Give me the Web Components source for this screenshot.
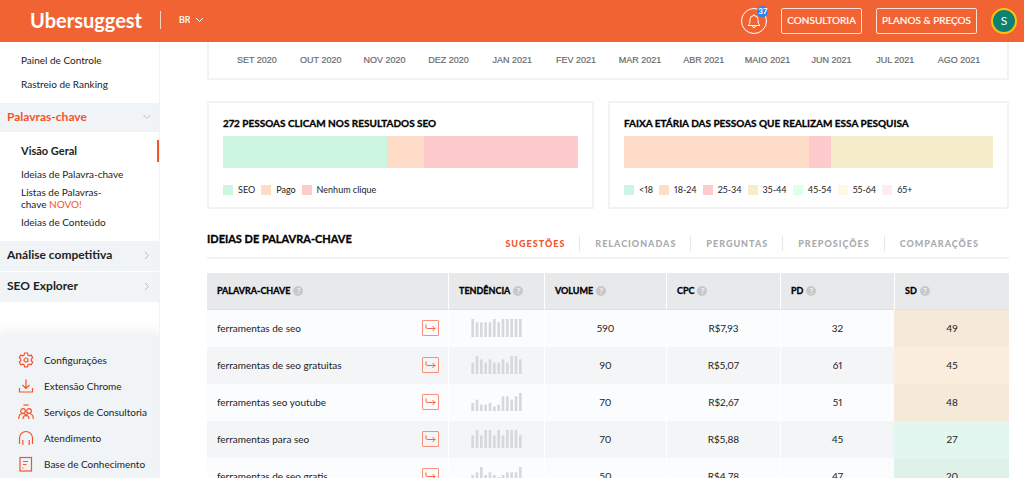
<!DOCTYPE html>
<html lang="pt-BR">
<head>
<meta charset="utf-8">
<title>Ubersuggest</title>
<style>
  body { margin: 0; font-family: Lato, "Open Sans", sans-serif; font-variant-numeric: proportional-nums; color: #222; background: #fff; }
</style>
</head>
<body>
<ub-app>
  <ub-header slot="header"></ub-header>
  <ub-sidebar slot="sidebar"></ub-sidebar>
  <ub-months></ub-months>
  <ub-cards>
    <ub-share-card heading="272 PESSOAS CLICAM NOS RESULTADOS SEO" data-set="clicks"></ub-share-card>
    <ub-share-card heading="FAIXA ETÁRIA DAS PESSOAS QUE REALIZAM ESSA PESQUISA" data-set="ages"></ub-share-card>
  </ub-cards>
  <ub-tabs></ub-tabs>
  <ub-keywords></ub-keywords>
</ub-app>

<script>
class UbElement extends HTMLElement {
  connectedCallback() {
    if (!this.shadowRoot) this.attachShadow({ mode: 'open' }).innerHTML =
      `<style>:host,*{box-sizing:border-box}button,select{font:inherit;color:inherit;margin:0;cursor:pointer}a{color:inherit;text-decoration:none}${this.css()}</style>${this.html()}`;
  }
  css() { return ''; }
  html() { return '<slot></slot>'; }
}

customElements.define('ub-app', class extends UbElement {
  css() { return `
    :host { display: flex; flex-direction: column; height: 100vh; overflow: hidden; }
    .body { display: flex; flex: 1; min-height: 0; }
    main { flex: 1; min-width: 0; padding: 0 15px 0 47px; overflow: hidden; }`; }
  html() { return `<slot name="header"></slot>
    <div class="body"><slot name="sidebar"></slot><main><slot></slot></main></div>`; }
});

customElements.define('ub-header', class extends UbElement {
  css() { return `
    :host { display: block; flex: none; background: #f26334; color: #fff; }
    header { display: flex; align-items: center; height: 42px; padding: 0 7px 0 30px; }
    .logo { font-size: 20px; line-height: 24px; font-weight: 700; padding-bottom: 3px; }
    .rule { width: 1px; height: 18px; background: #fbd0c1; margin: 0 18px 2px 18px; }
    .lang { display: flex; align-items: center; gap: 5px; padding-bottom: 3px; font-size: 9px; }
    select { appearance: none; border: 0; background: none; padding: 0; line-height: 14px; width: 11px; -webkit-text-stroke: .2px #fff; }
    option { color: #222; }
    .actions { display: flex; align-items: center; margin-left: auto; gap: 14px; }
    .bell { position: relative; width: 26px; height: 26px; border: 1px solid #fff; border-radius: 50%; background: none; padding: 0; display: grid; place-items: center; }
    .badge { position: absolute; top: -3px; right: -2px; min-width: 11px; height: 11px; border-radius: 6px; background: #2b83f6; font-size: 8px; line-height: 11px; font-weight: 700; }
    .cta { height: 26px; border: 1px solid #fde0d6; border-radius: 2px; background: none; padding: 0 5px 2px; font-size: 10px; line-height: 14px; white-space: nowrap; -webkit-text-stroke: .2px #fff; }
    .avatar { width: 26px; height: 26px; border-radius: 50%; border: 2px solid #fdc30a; background: #0b8272; padding: 0; font-size: 12px; line-height: 14px; }`; }
  html() { return `<header>
    <a class="logo" href="#">Ubersuggest</a><span class="rule"></span>
    <span class="lang"><select aria-label="Idioma"><option>BR</option></select>
      <svg width="9" height="6" viewBox="0 0 9 6" fill="none" stroke="#fff"><path d="M1 1l3.500 3.500L8 1"/></svg></span>
    <div class="actions">
      <button class="bell" aria-label="Notificações"><svg width="14" height="16" viewBox="0 0 14 16" fill="none" stroke="#fff"><path d="M1 12.500c1.500-1 2-2.500 2-6a4 4 0 0 1 8 0c0 3.500.5 5 2 6zM5.500 13a1.500 1.500 0 0 0 3 0M7 1.200V2.500"/></svg><span class="badge">37</span></button>
      <button class="cta">CONSULTORIA</button>
      <button class="cta">PLANOS &amp; PREÇOS</button>
      <button class="avatar">S</button>
    </div></header>`; }
});

const ICONS = {
  gear: '<circle cx="8" cy="8" r="2"/><path d="M6.500 1h3l.4 2 1.300.8 2-.7 1.500 2.600-1.500 1.400v1.700l1.500 1.400-1.500 2.600-2-.7-1.300.8-.4 2h-3l-.4-2-1.300-.8-2 .7-1.500-2.600 1.500-1.400V7.100L1.300 5.700l1.500-2.600 2 .7 1.300-.8z"/>',
  download: '<path d="M1.500 10v4h13v-4M8 1.500V10M4.500 7L8 10.500 11.500 7"/>',
  people: '<path d="M5.500 1h5"/><circle cx="5" cy="7" r="2.300"/><circle cx="11" cy="7" r="2.300"/><path d="M.7 15c0-3 1.300-5.500 4.300-5.500 1.500 0 2.500.8 3 2 .5-1.200 1.500-2 3-2 3 0 4.300 2.500 4.300 5.500M5 15c0-1.800 1-3.500 3-3.500s3 1.700 3 3.500"/>',
  phones: '<path d="M4.800 10v5M1.500 14V8a6.500 6.500 0 0 1 13 0v6M11.200 10v5"/>',
  doc: '<rect x="2" y="1.500" width="11.500" height="13.500"/><path d="M5 5.500h5M5 8.500h3.500M4.500 12h1"/>'
};
const chevron = (d) => `<svg width="8" height="9" viewBox="0 0 8 9" fill="none" stroke="#b9bdc1"><path d="${d}"/></svg>`;
const DOWN = 'M0.500 3L4 6.500 7.500 3', RIGHT = 'M2 1l3.500 3.500L2 8';

customElements.define('ub-sidebar', class extends UbElement {
  css() { return `
    :host { display: flex; flex-direction: column; flex: none; width: 160px; border-right: 1px solid #f1f2f3; font-size: 10px; line-height: 12px; }
    nav { display: flex; flex-direction: column; }
    .group { display: flex; flex-direction: column; gap: 12px; padding: 12px 0 13px 21px; }
    .keys { gap: 6px; padding: 13px 0 13px 21px; }
    .keys a:first-child { margin-bottom: 5px; }
    .active { font-size: 11px; font-weight: 700; position: relative; }
    .active::after { content: ""; position: absolute; right: 0; top: -5px; width: 2px; height: 22px; background: #f5532b; }
    em { color: #f5532b; font-style: normal; }
    .section { display: flex; justify-content: space-between; align-items: center; width: 100%; height: 30px; margin-bottom: 1px; padding: 0 8px 2px 7px; border: 0; background: #f0f4f7; font-size: 12px; font-weight: 700; line-height: 14px; }
    .open { color: #f5532b; height: 29px; margin: 0; }
    .foot { margin-top: auto; background: #f0f4f7; padding: 12px 0 1px 18px; box-shadow: 0 -4px 12px #0001; clip-path: inset(-20px 0 0 0); }
    .foot a { display: flex; align-items: center; gap: 10px; height: 26px; white-space: nowrap; }
    .foot svg { flex: none; }`; }
  html() {
    const foot = [['gear', 'Configurações'], ['download', 'Extensão Chrome'], ['people', 'Serviços de Consultoria'], ['phones', 'Atendimento'], ['doc', 'Base de Conhecimento']];
    return `<nav>
      <div class="group"><a href="#">Painel de Controle</a><a href="#">Rastreio de Ranking</a></div>
      <button class="section open">Palavras-chave ${chevron(DOWN)}</button>
      <div class="group keys"><a class="active" href="#">Visão Geral</a><a href="#">Ideias de Palavra-chave</a><a href="#">Listas de Palavras-<br>chave <em>NOVO!</em></a><a href="#">Ideias de Conteúdo</a></div>
      <button class="section">Análise competitiva ${chevron(RIGHT)}</button>
      <button class="section">SEO Explorer ${chevron(RIGHT)}</button>
    </nav>
    <div class="foot">${foot.map(([i, t]) => `<a href="#"><svg width="16" height="16" viewBox="0 0 16 16" fill="none" stroke="#f5532b" stroke-width="1.200">${ICONS[i]}</svg>${t}</a>`).join('')}</div>`; }
});

customElements.define('ub-months', class extends UbElement {
  css() { return `
    :host { display: grid; grid-template-columns: repeat(12, 1fr); height: 38px; padding: 12px 16px 0; border: solid #f3f3f3; border-width: 0 2px 2px; font: 9px/12px "Liberation Sans", Arial, sans-serif; color: #666; text-align: center; -webkit-text-stroke: .2px #777; }
    span { white-space: nowrap; }`; }
  html() { return ['SET 2020', 'OUT 2020', 'NOV 2020', 'DEZ 2020', 'JAN 2021', 'FEV 2021', 'MAR 2021', 'ABR 2021', 'MAIO 2021', 'JUN 2021', 'JUL 2021', 'AGO 2021'].map(m => `<span>${m}</span>`).join(''); }
});

customElements.define('ub-cards', class extends UbElement {
  css() { return ':host { display: grid; grid-template-columns: 387fr 401fr; gap: 14px; margin-top: 21px; }'; }
});

const SETS = {
  clicks: { bar: [[164, '#cdf6e2'], [36, '#fedcc8'], [154, '#fdcbcb']], legend: [['SEO', '#cdf6e2'], ['Pago', '#fedcc8'], ['Nenhum clique', '#fdcbcb']] },
  ages: { bar: [[185, '#fedcc8'], [23, '#fdcbcb'], [162, '#f6eecb']], legend: [['<18', '#cdf6e2'], ['18-24', '#fedcc8'], ['25-34', '#fdcbcb'], ['35-44', '#f6eecb'], ['45-54', '#dcfff0'], ['55-64', '#fff8e4'], ['65+', '#ffeded']] }
};
customElements.define('ub-share-card', class extends UbElement {
  css() { return `
    :host { display: block; border: 2px solid #f3f3f3; padding: 13px 14px 11px; }
    h3 { margin: 0 0 6px; font-size: 10px; line-height: 14px; font-weight: 700; color: #000; white-space: nowrap; -webkit-text-stroke: .3px #000; }
    .bar { display: flex; height: 32px; }
    ul { display: flex; gap: 6px; margin: 16px 0 0; padding: 0; list-style: none; font-size: 9px; line-height: 12px; }
    li { display: flex; align-items: center; gap: 5px; white-space: nowrap; }
    i { width: 10px; height: 10px; }`; }
  html() {
    const s = SETS[this.dataset.set];
    return `<h3>${this.getAttribute('heading')}</h3>
      <div class="bar">${s.bar.map(([w, c]) => `<span style="flex:${w};background:${c}"></span>`).join('')}</div>
      <ul>${s.legend.map(([t, c]) => `<li><i style="background:${c}"></i>${t.replace('<', '&lt;')}</li>`).join('')}</ul>`; }
});

customElements.define('ub-tabs', class extends UbElement {
  css() { return `
    :host { display: flex; justify-content: space-between; margin: 21px 0 14px; height: 29px; border-bottom: 2px solid #f1f1f1; }
    h2 { margin: 0; font-size: 11px; line-height: 18px; font-weight: 700; color: #000; white-space: nowrap; -webkit-text-stroke: .3px #000; }
    div { display: flex; height: 15px; margin: 6px 16px 0 0; }
    button { border: 0; background: none; padding: 0 14px 0 15px; font-size: 9px; line-height: 15px; font-weight: 900; letter-spacing: 1px; color: #a9abad; white-space: nowrap; }
    button + button { border-left: 1px solid #e6e6e6; }
    .on { color: #f5532b; }`; }
  html() { return `<h2>IDEIAS DE PALAVRA-CHAVE</h2><div role="tablist">${['SUGESTÕES', 'RELACIONADAS', 'PERGUNTAS', 'PREPOSIÇÕES', 'COMPARAÇÕES'].map((t, i) => `<button role="tab" aria-selected="${!i}" class="${i ? '' : 'on'}">${t}</button>`).join('')}</div>`; }
});

customElements.define('ub-trend', class extends UbElement {
  css() { return ':host { display: block; } svg { display: block; margin: auto; }'; }
  html() { return `<svg width="51" height="18" viewBox="0 0 153 54" fill="#d6d8d9">${this.getAttribute('values').split(' ').map((h, i) => `<rect x="${i * 13 + 1}" y="${54 - h}" width="8" height="${h}"/>`).join('')}</svg>`; }
});

const ROWS = [
  ['ferramentas de seo', '54 44 44 44 44 54 44 54 54 54 54 54', '590', 'R$7,93', '32', '49', '#f5ead9'],
  ['ferramentas de seo gratuitas', '34 54 44 34 44 34 34 44 34 54 54 44', '90', 'R$5,07', '61', '45', '#fbeedd'],
  ['ferramentas seo youtube', '24 34 19 19 24 14 19 44 44 34 44 54', '70', 'R$2,67', '51', '48', '#f5ead9'],
  ['ferramentas para seo', '38 54 38 54 54 38 54 38 54 54 54 38', '70', 'R$5,88', '45', '27', '#e2f7ef'],
  ['ferramentas de seo gratis', '30 38 54 30 38 30 24 30 38 38 38 54', '50', 'R$4,78', '47', '20', '#dff2ea']
];
customElements.define('ub-keywords', class extends UbElement {
  css() { return `
    :host { display: block; }
    table { width: 100%; table-layout: fixed; border-collapse: separate; border-spacing: 0; }
    th, td { height: 37px; padding: 0 0 1px; border-left: 1px solid #fff; text-align: center; font-size: 10px; line-height: 14px; }
    th:first-child, td:first-child { border-left: 0; text-align: left; }
    th { background: #e8e9eb; padding: 0 0 1px 10px; text-align: left; font-size: 9px; font-weight: 700; color: #000; white-space: nowrap; border-bottom: 1px solid #dfe1e3; -webkit-text-stroke: .3px #000; }
    th div, .key { display: flex; align-items: center; gap: 3px; }
    .help { width: 10px; height: 10px; padding: 0; border: 0; border-radius: 50%; background: #c6c8ca; color: #f4f4f4; font-size: 8px; line-height: 10px; -webkit-text-stroke: 0; }
    td { background: #fafcfe; }
    tr:nth-child(even) td { background: #f4f5f7; }
    tbody tr td:last-child { background: var(--score); border-left-color: var(--score); }
    .key { justify-content: space-between; padding: 0 9px 0 10px; }
    .go { width: 17px; height: 16px; border: 1px solid #f9917a; border-radius: 1px; background: none; padding: 0; display: grid; place-items: center; }`; }
  html() {
    const widths = [241, 96, 122, 114, 114, 115];
    return `<table><colgroup>${widths.map(w => `<col style="width:${w}px">`).join('')}</colgroup>
      <thead><tr>${['PALAVRA-CHAVE', 'TENDÊNCIA', 'VOLUME', 'CPC', 'PD', 'SD'].map(t => `<th><div>${t} <button class="help" aria-label="Ajuda">?</button></div></th>`).join('')}</tr></thead>
      <tbody>${ROWS.map(([k, v, vol, cpc, pd, sd, c]) => `<tr style="--score:${c}"><td><div class="key">${k}<button class="go" aria-label="Abrir"><svg width="11" height="10" viewBox="0 0 11 10" fill="none" stroke="#f5532b" stroke-width=".9"><path d="M1 1.500V4Q1 5.500 2.500 5.500H10M7.500 3L10 5.500 7.500 8"/></svg></button></div></td><td><ub-trend values="${v}"></ub-trend></td><td>${vol}</td><td>${cpc}</td><td>${pd}</td><td>${sd}</td></tr>`).join('')}</tbody></table>`; }
});
</script>
</body>
</html>
